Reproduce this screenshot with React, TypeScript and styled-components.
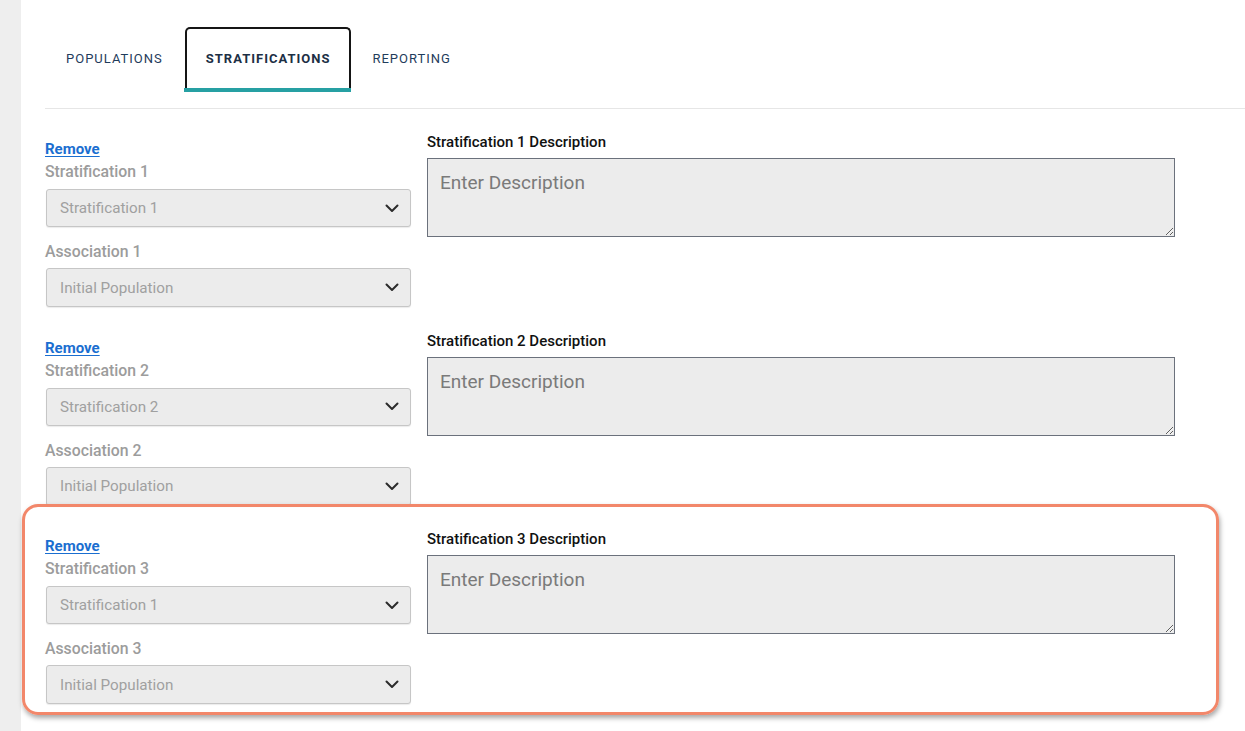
import React from "react";
import styled, { createGlobalStyle } from "styled-components";

const Global = createGlobalStyle`
  html, body { margin: 0; padding: 0; background: #fff; }
  body { font-family: Roboto, "Noto Sans", "Liberation Sans", sans-serif; }
  *, *::before, *::after { box-sizing: border-box; }
`;

const Page = styled.div`
  display: flex;
  width: 1245px;
  height: 731px;
  overflow: hidden;
  background: #fff;
`;

const SideStrip = styled.div`
  width: 21px;
  flex: none;
  background: #eeeeee;
`;

const Main = styled.main`
  flex: 1;
  padding: 27px 0 0 24px;
  display: flex;
  flex-direction: column;
`;

const TabBar = styled.div`
  display: flex;
  align-items: stretch;
  height: 65px;
`;

const Tab = styled.button<{ $active?: boolean }>`
  position: relative;
  font-family: Roboto, "Noto Sans", sans-serif;
  font-size: 13px;
  letter-spacing: 1px;
  font-weight: ${(p) => (p.$active ? 700 : 400)};
  color: ${(p) => (p.$active ? "#1c2f45" : "#1f3c5c")};
  background: #fff;
  border: 2px solid ${(p) => (p.$active ? "#151515" : "transparent")};
  border-bottom: none;
  border-radius: 5px 5px 0 0;
  padding: 0 19px 4px;
  margin-right: ${(p) => (p.$active ? "0" : "1px")};
  cursor: pointer;
  &::after {
    content: "";
    position: absolute;
    left: -3px;
    right: -3px;
    bottom: 0;
    height: 4px;
    background: ${(p) => (p.$active ? "#26a0a3" : "transparent")};
  }
`;

const Divider = styled.div`
  height: 1px;
  background: #e6e6e6;
  margin-top: 16px;
`;

const SectionList = styled.div`
  display: flex;
  flex-direction: column;
  gap: 24.5px;
  padding-top: 24px;
`;

const Section = styled.section<{ $highlight?: boolean }>`
  position: relative;
  display: grid;
  grid-template-columns: 365px 748px;
  column-gap: 17px;
  padding-left: 1px;
  &::before {
    content: "";
    display: ${(p) => (p.$highlight ? "block" : "none")};
    position: absolute;
    left: -23px;
    top: -26px;
    width: 1197px;
    height: 211px;
    border: 3px solid #f2876a;
    border-radius: 16px;
    box-shadow: 1px 3px 5px rgba(0, 0, 0, 0.35);
    pointer-events: none;
  }
`;

const LeftCol = styled.div`
  display: flex;
  flex-direction: column;
  padding-top: 7px;
`;

const RemoveLink = styled.a`
  font-size: 15px;
  line-height: 18px;
  font-weight: 700;
  color: #1a6ed0;
  text-decoration: underline;
  text-underline-offset: 2px;
  align-self: flex-start;
  margin-left: -1px;
  cursor: pointer;
`;

const FieldLabel = styled.label<{ $gap: number }>`
  margin-top: ${(p) => p.$gap}px;
  margin-left: -1px;
  font-size: 15.8px;
  line-height: 18px;
  font-weight: 500;
  color: #9c9c9c;
`;

const SelectBox = styled.div<{ $gap: number; $h: number }>`
  margin-top: ${(p) => p.$gap}px;
  height: ${(p) => p.$h}px;
  display: flex;
  align-items: center;
  justify-content: space-between;
  padding: 0 11px 0 13px;
  background: #ececec;
  border: 1px solid #c6c6c6;
  border-radius: 3px;
  box-shadow: 0 1px 1px rgba(0, 0, 0, 0.08);
  font-size: 15.2px;
  color: #a0a0a0;
`;

const RightCol = styled.div`
  display: flex;
  flex-direction: column;
  margin-left: -1px;
`;

const DescLabel = styled.label`
  font-size: 15px;
  line-height: 18px;
  font-weight: 500;
  color: #111;
`;

const TextArea = styled.textarea`
  margin-top: 7px;
  width: 748px;
  height: 79px;
  resize: vertical;
  background: #ececec;
  border: 1px solid #6b717c;
  border-radius: 0;
  padding: 12px 12px;
  font-family: Roboto, "Noto Sans", sans-serif;
  font-size: 19px;
  color: #333;
  outline: none;
  &::placeholder {
    color: #7a7a7a;
  }
`;

const Chevron = () => (
  <svg width="14" height="9" viewBox="0 0 14 9" fill="none">
    <path d="M1.5 1.5 L7 7 L12.5 1.5" stroke="#2b2b2b" strokeWidth="2" strokeLinecap="round" strokeLinejoin="round" />
  </svg>
);

const sections = [
  { n: 1, strat: "Stratification 1", assoc: "Initial Population" },
  { n: 2, strat: "Stratification 2", assoc: "Initial Population" },
  { n: 3, strat: "Stratification 1", assoc: "Initial Population", highlight: true },
];

export default function App() {
  return (
    <>
      <Global />
      <Page>
        <SideStrip />
        <Main>
          <TabBar>
            <Tab>POPULATIONS</Tab>
            <Tab $active>STRATIFICATIONS</Tab>
            <Tab>REPORTING</Tab>
          </TabBar>
          <Divider />
          <SectionList>
            {sections.map((s) => (
              <Section key={s.n} $highlight={s.highlight}>
                <LeftCol>
                  <RemoveLink>Remove</RemoveLink>
                  <FieldLabel $gap={5}>Stratification {s.n}</FieldLabel>
                  <SelectBox $gap={8} $h={38}>
                    <span>{s.strat}</span>
                    <Chevron />
                  </SelectBox>
                  <FieldLabel $gap={16}>Association {s.n}</FieldLabel>
                  <SelectBox $gap={7} $h={39}>
                    <span>{s.assoc}</span>
                    <Chevron />
                  </SelectBox>
                </LeftCol>
                <RightCol>
                  <DescLabel>Stratification {s.n} Description</DescLabel>
                  <TextArea placeholder="Enter Description" />
                </RightCol>
              </Section>
            ))}
          </SectionList>
        </Main>
      </Page>
    </>
  );
}
